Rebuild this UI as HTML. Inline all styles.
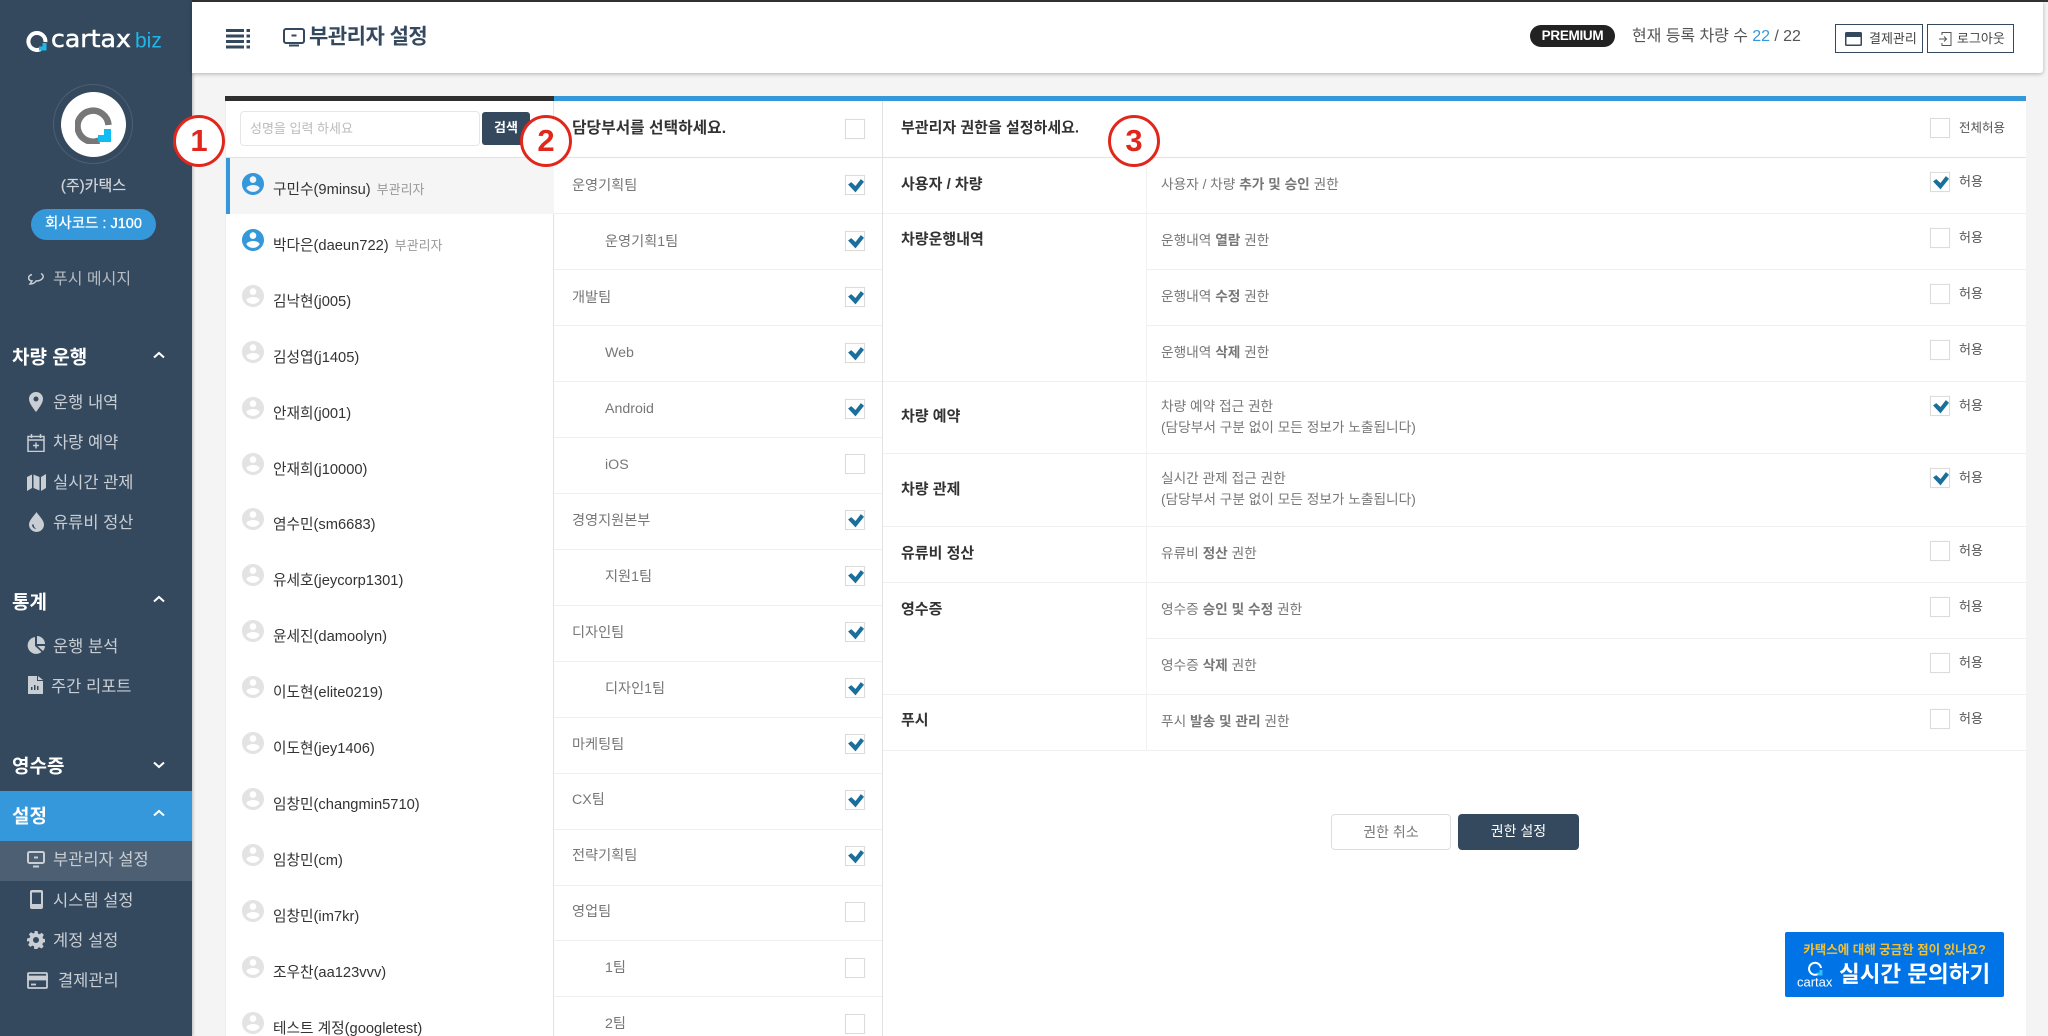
<!DOCTYPE html>
<html lang="ko"><head><meta charset="utf-8"><title>부관리자 설정</title>
<style>
*{box-sizing:border-box}
html,body{margin:0;padding:0;width:2048px;height:1036px;overflow:hidden;background:#f4f4f4;font-family:"Liberation Sans","Noto Sans CJK KR",sans-serif;color:#333}
#root{position:absolute;left:0;top:0;width:2048px;height:1036px;overflow:hidden;background:#f4f4f4}
.a{position:absolute;white-space:nowrap}
#side{position:absolute;left:0;top:0;width:192px;height:1036px;background:#34495e;box-shadow:1px 0 3px rgba(0,0,0,.25)}
#topline{position:absolute;left:0;top:0;width:2048px;height:2px;background:#333}
#head{position:absolute;left:192px;top:2px;width:1851px;height:71px;background:#fff;box-shadow:0 1px 4px rgba(0,0,0,.28);border-radius:0 0 3px 0}
.t{transform:translateY(-50%);line-height:1}
.sec{left:12px;font-size:19px;font-weight:bold;color:#fff;margin-top:1px}
.it{left:53px;font-size:16.5px;color:#c9ced4;margin-top:1px}
.ic{position:absolute;fill:#c9ced4}
.chev{position:absolute;left:153px;width:12px;height:8px;fill:none;stroke:#fff;stroke-width:2}
.panel{position:absolute;top:96px;height:940px;background:#fff}
.bar{position:absolute;left:0;top:0;right:0;height:5px}
.row{position:absolute;left:0;width:100%;height:56px}
.nm{position:absolute;left:47px;top:22px;font-size:14.7px;line-height:20px;color:#333;white-space:nowrap}
.nm small{font-size:13px;color:#999;margin-left:6px}
.pi{position:absolute;left:16px;top:15px;width:22px;height:22px;fill:#e3e3e3}
.pi.on{fill:#3498db}
.cb{position:absolute;width:20px;height:20px;background:#fff;border:1px solid #dcdcdc;box-shadow:0 0 1px rgba(0,0,0,.08)}
.cb svg{position:absolute;left:1px;top:1px;width:17px;height:17px;fill:#1a6f9c}
.dp{position:absolute;font-size:14.2px;color:#777;top:0;line-height:56px;white-space:nowrap;margin-top:1px}
.line{position:absolute;height:1px;background:#f0f0f0}
.lb{position:absolute;left:901px;font-size:15px;font-weight:bold;color:#333;white-space:nowrap;line-height:20px;margin-top:1px}
.sb{position:absolute;left:1161px;font-size:13.7px;color:#777;white-space:nowrap;line-height:21px;margin-top:1px}
.sb b{color:#777}
.hy{position:absolute;left:1959px;font-size:13px;color:#555;line-height:16px;margin-top:1px}
.num{position:absolute;width:52px;height:52px;border:3px solid #e1261c;border-radius:50%;background:#fff;color:#e1261c;font:bold 31px/46px "Liberation Sans",sans-serif;text-align:center}
.tb{position:absolute;top:24px;height:29px;border:1px solid #34495e;background:#fff;font-size:13px;color:#444;line-height:27px;white-space:nowrap}
</style></head><body>
<div id="root">
<svg width="0" height="0" style="position:absolute"><defs>
<symbol id="person" viewBox="2 2 20 20"><path d="M12 2C6.48 2 2 6.48 2 12s4.48 10 10 10 10-4.48 10-10S17.52 2 12 2zm0 3c1.66 0 3 1.34 3 3s-1.34 3-3 3-3-1.34-3-3 1.34-3 3-3zm0 14.2c-2.5 0-4.71-1.28-6-3.22.03-1.99 4-3.08 6-3.08 1.99 0 5.97 1.09 6 3.08-1.29 1.94-3.5 3.22-6 3.22z"/></symbol>
<symbol id="chk" viewBox="0 0 16 16"><path d="M1 7 4 4.800 8 8.500 13 2 16 4.500 8 14.500z"/></symbol>
</defs></svg>

<div id="topline"></div>
<div id="side">
 <svg class="a" style="left:26px;top:30px" width="22" height="22" viewBox="0 0 22 22"><path d="M14.500 19.200A8.500 8.500 0 1 1 19.400 12" fill="none" stroke="#fff" stroke-width="4"/><path d="M13 20.500v-4h3.500V13h4v7.500z" fill="#1fb6e8"/></svg>
 <div class="a t" style="left:51px;top:39px;font-size:24px;color:#fff;font-family:'DejaVu Sans',sans-serif;-webkit-text-stroke:.5px #fff;transform:translateY(-50%) scaleX(1.05);transform-origin:left center">cartax</div>
 <div class="a t" style="left:135px;top:41px;font-size:21px;color:#1fb6e8">biz</div>
 <div class="a" style="left:53px;top:84px;width:80px;height:80px;border:1px solid #4c6074;border-radius:50%"></div>
 <div class="a" style="left:61px;top:92px;width:65px;height:65px;background:#fff;border-radius:50%"></div>
 <svg class="a" style="left:75px;top:106px" width="38" height="38" viewBox="0 0 38 38"><path d="M24 34.500A15.500 15.500 0 1 1 33.500 19" fill="none" stroke="#777" stroke-width="6.500"/><path d="M23 36v-7h6v-6h7v13z" fill="#10bdf2"/></svg>
 <div class="a t" style="left:0;width:187px;text-align:center;top:186px;font-size:15px;color:#d2d6da;-webkit-text-stroke:.2px #d2d6da">(주)카택스</div>
 <div class="a" style="left:31px;top:209px;width:125px;height:31px;border-radius:16px;background:#3498db;color:#fff;font-size:14.5px;-webkit-text-stroke:.3px #fff;line-height:31px;text-align:center">회사코드 : J100</div>
 <svg class="ic" style="left:27px;top:272px;fill:none;stroke:#c9ced4;stroke-width:1.500" width="18" height="14" viewBox="0 0 18 14"><path d="M5 2.500c-5 1.500-4 6 0 6.500L3 12c3 0 5-1.500 6-3 5 0 8-3 7-5.500-.3-1-1-1.500-2-2"/></svg>
 <div class="a t" style="left:53px;top:280px;font-size:16px;color:#b5bbc2">푸시 메시지</div>

 <div class="a t sec" style="top:357px">차량 운행</div>
 <svg class="chev" style="top:351px" viewBox="0 0 12 8"><path d="M1 6.500 6 2l5 4.500"/></svg>
 <svg class="ic" style="left:29px;top:392px" width="14" height="20" viewBox="0 0 14 20"><path fill-rule="evenodd" d="M7 0a7 7 0 0 1 7 7c0 4-4 9-7 13C4 16 0 11 0 7a7 7 0 0 1 7-7zm0 4.500a2.500 2.500 0 1 0 0 5 2.500 2.500 0 0 0 0-5z"/></svg>
 <div class="a t it" style="top:402px">운행 내역</div>
 <svg class="ic" style="left:27px;top:433px;fill:none;stroke:#c9ced4;stroke-width:1.500" width="18" height="19" viewBox="0 0 18 19"><path d="M1 3.500h16v15H1zM1 7h16M4.500 1v4M13.500 1v4M6 12.500h6M9 9.500v6"/></svg>
 <div class="a t it" style="top:442px">차량 예약</div>
 <svg class="ic" style="left:27px;top:474px" width="19" height="17" viewBox="0 0 19 17"><path d="M0 3l5-2.500V14l-5 3zM6.500.5l6 2.500v13.500l-6-2.500zM14 3l5-3v14l-5 3z"/></svg>
 <div class="a t it" style="top:482px">실시간 관제</div>
 <svg class="ic" style="left:29px;top:512px" width="15" height="20" viewBox="0 0 15 20"><path fill-rule="evenodd" d="M7.500 0c2 3.500 7.500 8 7.500 12.500a7.500 7.500 0 0 1-15 0C0 8 5.500 3.500 7.500 0zM3 12.500c0 2.500 2 4.500 4.500 4.500-1.500-.8-2.800-2.500-2.800-4.500z"/></svg>
 <div class="a t it" style="top:522px">유류비 정산</div>

 <div class="a t sec" style="top:602px">통계</div>
 <svg class="chev" style="top:595px" viewBox="0 0 12 8"><path d="M1 6.500 6 2l5 4.500"/></svg>
 <svg class="ic" style="left:27px;top:636px" width="18" height="18" viewBox="0 0 18 18"><path d="M8 1v9l6.500 6A8.500 8.500 0 1 1 8 1zM10 0a8 8 0 0 1 8 8h-8zM10.500 10H18a8 8 0 0 1-2 5z"/></svg>
 <div class="a t it" style="top:646px">운행 분석</div>
 <svg class="ic" style="left:28px;top:676px" width="15" height="18" viewBox="0 0 15 18"><path fill-rule="evenodd" d="M0 0h9v5h6v13H0zM10 0l5 4h-5zM3 14h1.500v-3H3zm3 0h1.500V9H6zm3 0h1.500v-4H9z"/></svg>
 <div class="a t it" style="left:51px;top:686px">주간 리포트</div>

 <div class="a t sec" style="top:766px">영수증</div>
 <svg class="chev" style="top:761px" viewBox="0 0 12 8"><path d="M1 1.500 6 6l5-4.500"/></svg>
 <div class="a" style="left:0;top:791px;width:192px;height:50px;background:#3498db"></div>
 <div class="a t sec" style="top:816px">설정</div>
 <svg class="chev" style="top:809px" viewBox="0 0 12 8"><path d="M1 6.500 6 2l5 4.500"/></svg>
 <div class="a" style="left:0;top:841px;width:192px;height:40px;background:#4d5f72"></div>
 <svg class="ic" style="left:27px;top:851px;fill:none;stroke:#c9ced4;stroke-width:2" width="18" height="17" viewBox="0 0 18 17"><path d="M2.500 1h13a1.500 1.500 0 0 1 1.500 1.500v8a1.500 1.500 0 0 1-1.500 1.500h-13A1.500 1.500 0 0 1 1 10.500v-8A1.500 1.500 0 0 1 2.500 1zM6 15.500h6M7 6.500h4"/></svg>
 <div class="a t it" style="top:859px">부관리자 설정</div>
 <svg class="ic" style="left:30px;top:890px" width="13" height="19" viewBox="0 0 13 19"><path fill-rule="evenodd" d="M2 0h9a2 2 0 0 1 2 2v15a2 2 0 0 1-2 2H2a2 2 0 0 1-2-2V2a2 2 0 0 1 2-2zm0 2.500V14h9V2.500z"/></svg>
 <div class="a t it" style="top:900px">시스템 설정</div>
 <svg class="ic" style="left:27px;top:931px" width="18" height="18" viewBox="0 0 18 18"><path fill-rule="evenodd" d="M7.500 0h3l.5 2.500 1.500.7 2.300-1.300 2 2-1.300 2.300.7 1.500 2.300.5v3l-2.500.5-.7 1.500 1.300 2.300-2 2-2.300-1.300-1.500.7-.5 2.300h-3L7 15.300l-1.500-.7-2.300 1.300-2-2 1.300-2.300-.7-1.500L0 10.500v-3l2.500-.5.7-1.500-1.300-2.300 2-2 2.300 1.300 1.500-.7zM9 6a3 3 0 1 0 0 6 3 3 0 0 0 0-6z"/></svg>
 <div class="a t it" style="top:940px">계정 설정</div>
 <svg class="ic" style="left:27px;top:972px;fill:none;stroke:#c9ced4;stroke-width:1.800" width="21" height="17" viewBox="0 0 21 17"><path d="M2 1h17a1 1 0 0 1 1 1v13a1 1 0 0 1-1 1H2a1 1 0 0 1-1-1V2a1 1 0 0 1 1-1z"/><path d="M1 4.500h19v3H1z" fill="#c9ced4"/><path d="M4 12.500h5"/></svg>
 <div class="a t it" style="left:58px;top:980px">결제관리</div>
</div>

<div id="head"></div>
<svg class="a" style="left:226px;top:29px" width="25" height="20" viewBox="0 0 25 20" fill="#34495e"><path d="M0 0h18v3H0zM0 5.500h18v3H0zM0 11h18v3H0zM0 16.500h18v3H0zM20.500 0H24v3h-3.500zM20.500 5.500H24v3h-3.500zM20.500 11H24v3h-3.500zM20.500 16.500H24v3h-3.500z"/></svg>
<svg class="a" style="left:283px;top:28px" width="22" height="19" viewBox="0 0 22 19" fill="none" stroke="#34495e" stroke-width="2"><path d="M3 1h16a2 2 0 0 1 2 2v10a2 2 0 0 1-2 2H3a2 2 0 0 1-2-2V3a2 2 0 0 1 2-2zM6 17.500h10M8.500 7.500h5"/></svg>
<div class="a t" style="left:309px;top:37px;font-size:21px;font-weight:bold;color:#34495e;letter-spacing:-.5px">부관리자 설정</div>
<div class="a" style="left:1530px;top:25px;width:85px;height:22px;border-radius:11px;background:#222;color:#fff;font-size:13.5px;font-weight:bold;line-height:22px;text-align:center;letter-spacing:-.3px">PREMIUM</div>
<div class="a t" style="left:1632px;top:37px;font-size:16px;color:#555;letter-spacing:-.05px">현재 등록 차량 수 <span style="color:#3498db">22</span> / 22</div>
<div class="tb" style="left:1835px;width:88px;padding-left:33px">결제관리<svg class="a" style="left:9px;top:7px" width="17" height="14" viewBox="0 0 17 14"><path d="M1.500 0h14A1.500 1.500 0 0 1 17 1.500v11a1.500 1.500 0 0 1-1.500 1.500h-14A1.500 1.500 0 0 1 0 12.500v-11A1.500 1.500 0 0 1 1.500 0zM1.500 5v7.500h14V5z" fill="#34495e" fill-rule="evenodd"/></svg></div>
<div class="tb" style="left:1927px;width:87px;padding-left:29px">로그아웃<svg class="a" style="left:11px;top:7px" width="13" height="14" viewBox="0 0 13 14" fill="none" stroke="#555"><path d="M3 3V.5h9v13H3V11M0 7h7M5 4.500 7.500 7 5 9.500"/></svg></div>

<!-- list panel -->
<div class="panel" style="left:225px;width:329px;border-right:1px solid #e2e2e2;border-left:1px solid #ececec">
 <div class="bar" style="background:#2f2f2f;left:-1px;right:-1px"></div>
 <div class="a" style="left:14px;top:15px;width:240px;height:35px;border:1px solid #e6e6e6;border-radius:4px;font-size:13px;color:#bbb;line-height:33px;padding-left:9px">성명을 입력 하세요</div>
 <div class="a" style="left:256px;top:16px;width:48px;height:33px;border-radius:3px;background:#34495e;color:#fff;font-size:13px;line-height:31px;text-align:center;font-weight:bold">검색</div>
 <div class="a" style="left:0;top:61px;width:328px;height:1px;background:#e2e2e2"></div>
 <div class="a" style="left:0;top:62px;width:328px;height:878px;overflow:hidden">
  <div class="row" style="top:0;background:#f5f5f5;border-left:4px solid #3498db"><svg class="pi on" style="left:12px"><use href="#person"/></svg><div class="nm" style="left:43px">구민수(9minsu)<small>부관리자</small></div></div>
  <div class="row" style="top:55.900px"><svg class="pi on"><use href="#person"/></svg><div class="nm">박다은(daeun722)<small>부관리자</small></div></div>
  <div class="row" style="top:111.800px"><svg class="pi"><use href="#person"/></svg><div class="nm">김낙현(j005)</div></div>
  <div class="row" style="top:167.700px"><svg class="pi"><use href="#person"/></svg><div class="nm">김성엽(j1405)</div></div>
  <div class="row" style="top:223.600px"><svg class="pi"><use href="#person"/></svg><div class="nm">안재희(j001)</div></div>
  <div class="row" style="top:279.500px"><svg class="pi"><use href="#person"/></svg><div class="nm">안재희(j10000)</div></div>
  <div class="row" style="top:335.400px"><svg class="pi"><use href="#person"/></svg><div class="nm">염수민(sm6683)</div></div>
  <div class="row" style="top:391.300px"><svg class="pi"><use href="#person"/></svg><div class="nm">유세호(jeycorp1301)</div></div>
  <div class="row" style="top:447.200px"><svg class="pi"><use href="#person"/></svg><div class="nm">윤세진(damoolyn)</div></div>
  <div class="row" style="top:503.100px"><svg class="pi"><use href="#person"/></svg><div class="nm">이도현(elite0219)</div></div>
  <div class="row" style="top:559px"><svg class="pi"><use href="#person"/></svg><div class="nm">이도현(jey1406)</div></div>
  <div class="row" style="top:614.900px"><svg class="pi"><use href="#person"/></svg><div class="nm">임창민(changmin5710)</div></div>
  <div class="row" style="top:670.800px"><svg class="pi"><use href="#person"/></svg><div class="nm">임창민(cm)</div></div>
  <div class="row" style="top:726.700px"><svg class="pi"><use href="#person"/></svg><div class="nm">임창민(im7kr)</div></div>
  <div class="row" style="top:782.600px"><svg class="pi"><use href="#person"/></svg><div class="nm">조우찬(aa123vvv)</div></div>
  <div class="row" style="top:838.500px"><svg class="pi"><use href="#person"/></svg><div class="nm">테스트 계정(googletest)</div></div>
 </div>
</div>

<!-- dept panel -->
<div class="panel" style="left:554px;width:329px;border-right:1px solid #e2e2e2">
 <div class="bar" style="background:#3498db;right:-1px;left:0"></div>
 <div class="a t" style="left:18px;top:33px;font-size:15.800px;font-weight:bold;color:#333">담당부서를 선택하세요.</div>
 <div class="cb" style="left:291px;top:23px"></div>
 <div class="a" style="left:0;top:61px;width:328px;height:1px;background:#e2e2e2"></div>
</div>
<div class="line" style="left:554px;top:213px;width:328px"></div>
<div class="line" style="left:554px;top:269px;width:328px"></div>
<div class="line" style="left:554px;top:325px;width:328px"></div>
<div class="line" style="left:554px;top:381px;width:328px"></div>
<div class="line" style="left:554px;top:437px;width:328px"></div>
<div class="line" style="left:554px;top:493px;width:328px"></div>
<div class="line" style="left:554px;top:549px;width:328px"></div>
<div class="line" style="left:554px;top:605px;width:328px"></div>
<div class="line" style="left:554px;top:661px;width:328px"></div>
<div class="line" style="left:554px;top:717px;width:328px"></div>
<div class="line" style="left:554px;top:773px;width:328px"></div>
<div class="line" style="left:554px;top:829px;width:328px"></div>
<div class="line" style="left:554px;top:885px;width:328px"></div>
<div class="line" style="left:554px;top:940px;width:328px"></div>
<div class="line" style="left:554px;top:996px;width:328px"></div>
<div class="dp" style="left:572px;top:157px">운영기획팀</div><div class="cb" style="left:845px;top:175px"><svg><use href="#chk"/></svg></div>
<div class="dp" style="left:605px;top:213px">운영기획1팀</div><div class="cb" style="left:845px;top:231px"><svg><use href="#chk"/></svg></div>
<div class="dp" style="left:572px;top:269px">개발팀</div><div class="cb" style="left:845px;top:287px"><svg><use href="#chk"/></svg></div>
<div class="dp" style="left:605px;top:324px">Web</div><div class="cb" style="left:845px;top:343px"><svg><use href="#chk"/></svg></div>
<div class="dp" style="left:605px;top:380px">Android</div><div class="cb" style="left:845px;top:399px"><svg><use href="#chk"/></svg></div>
<div class="dp" style="left:605px;top:436px">iOS</div><div class="cb" style="left:845px;top:454px"></div>
<div class="dp" style="left:572px;top:492px">경영지원본부</div><div class="cb" style="left:845px;top:510px"><svg><use href="#chk"/></svg></div>
<div class="dp" style="left:605px;top:548px">지원1팀</div><div class="cb" style="left:845px;top:566px"><svg><use href="#chk"/></svg></div>
<div class="dp" style="left:572px;top:604px">디자인팀</div><div class="cb" style="left:845px;top:622px"><svg><use href="#chk"/></svg></div>
<div class="dp" style="left:605px;top:660px">디자인1팀</div><div class="cb" style="left:845px;top:678px"><svg><use href="#chk"/></svg></div>
<div class="dp" style="left:572px;top:716px">마케팅팀</div><div class="cb" style="left:845px;top:734px"><svg><use href="#chk"/></svg></div>
<div class="dp" style="left:572px;top:771px">CX팀</div><div class="cb" style="left:845px;top:790px"><svg><use href="#chk"/></svg></div>
<div class="dp" style="left:572px;top:827px">전략기획팀</div><div class="cb" style="left:845px;top:846px"><svg><use href="#chk"/></svg></div>
<div class="dp" style="left:572px;top:883px">영업팀</div><div class="cb" style="left:845px;top:902px"></div>
<div class="dp" style="left:605px;top:939px">1팀</div><div class="cb" style="left:845px;top:958px"></div>
<div class="dp" style="left:605px;top:995px">2팀</div><div class="cb" style="left:845px;top:1014px"></div>

<!-- perm panel -->
<div class="panel" style="left:883px;width:1143px">
 <div class="bar" style="background:#3498db"></div>
 <div class="a" style="left:0;top:61px;width:1143px;height:1px;background:#e2e2e2"></div>
</div>
<div class="a t" style="left:901px;top:128px;font-size:15px;font-weight:bold;color:#333">부관리자 권한을 설정하세요.</div>
<div class="cb" style="left:1930px;top:118px"></div>
<div class="hy" style="top:119px;font-size:12.500px">전체허용</div>

<div class="line" style="left:1146px;top:157px;width:1px;height:593px;background:#f2f2f2"></div>
<div class="line" style="left:883px;top:213px;width:1143px"></div>
<div class="line" style="left:1146px;top:269px;width:880px"></div>
<div class="line" style="left:1146px;top:325px;width:880px"></div>
<div class="line" style="left:883px;top:381px;width:1143px"></div>
<div class="line" style="left:883px;top:453px;width:1143px"></div>
<div class="line" style="left:883px;top:526px;width:1143px"></div>
<div class="line" style="left:883px;top:582px;width:1143px"></div>
<div class="line" style="left:1146px;top:638px;width:880px"></div>
<div class="line" style="left:883px;top:694px;width:1143px"></div>
<div class="line" style="left:883px;top:750px;width:1143px"></div>

<div class="lb" style="top:174px">사용자 / 차량</div>
<div class="lb" style="top:229px">차량운행내역</div>
<div class="lb" style="top:406px">차량 예약</div>
<div class="lb" style="top:479px">차량 관제</div>
<div class="lb" style="top:543px">유류비 정산</div>
<div class="lb" style="top:599px">영수증</div>
<div class="lb" style="top:710px">푸시</div>

<div class="sb" style="top:173px">사용자 / 차량 <b>추가 및 승인</b> 권한</div>
<div class="sb" style="top:229px">운행내역 <b>열람</b> 권한</div>
<div class="sb" style="top:285px">운행내역 <b>수정</b> 권한</div>
<div class="sb" style="top:341px">운행내역 <b>삭제</b> 권한</div>
<div class="sb" style="top:395px">차량 예약 접근 권한<br>(담당부서 구분 없이 모든 정보가 노출됩니다)</div>
<div class="sb" style="top:467px">실시간 관제 접근 권한<br>(담당부서 구분 없이 모든 정보가 노출됩니다)</div>
<div class="sb" style="top:542px">유류비 <b>정산</b> 권한</div>
<div class="sb" style="top:598px">영수증 <b>승인 및 수정</b> 권한</div>
<div class="sb" style="top:654px">영수증 <b>삭제</b> 권한</div>
<div class="sb" style="top:710px">푸시 <b>발송 및 관리</b> 권한</div>

<div class="cb" style="left:1930px;top:172px"><svg><use href="#chk"/></svg></div><div class="hy" style="top:173px">허용</div>
<div class="cb" style="left:1930px;top:228px"></div><div class="hy" style="top:229px">허용</div>
<div class="cb" style="left:1930px;top:284px"></div><div class="hy" style="top:285px">허용</div>
<div class="cb" style="left:1930px;top:340px"></div><div class="hy" style="top:341px">허용</div>
<div class="cb" style="left:1930px;top:396px"><svg><use href="#chk"/></svg></div><div class="hy" style="top:397px">허용</div>
<div class="cb" style="left:1930px;top:468px"><svg><use href="#chk"/></svg></div><div class="hy" style="top:469px">허용</div>
<div class="cb" style="left:1930px;top:541px"></div><div class="hy" style="top:542px">허용</div>
<div class="cb" style="left:1930px;top:597px"></div><div class="hy" style="top:598px">허용</div>
<div class="cb" style="left:1930px;top:653px"></div><div class="hy" style="top:654px">허용</div>
<div class="cb" style="left:1930px;top:709px"></div><div class="hy" style="top:710px">허용</div>

<div class="a" style="left:1331px;top:814px;width:120px;height:36px;border:1px solid #ddd;border-radius:4px;background:#fff;color:#777;font-size:14px;line-height:34px;text-align:center">권한 취소</div>
<div class="a" style="left:1458px;top:814px;width:121px;height:36px;border-radius:4px;background:#34495e;color:#fff;font-size:14px;line-height:34px;text-align:center">권한 설정</div>

<div class="a" style="left:1785px;top:932px;width:219px;height:65px;border-radius:2px;background:#0073e6"></div>
<div class="a t" style="left:1785px;width:219px;text-align:center;top:950px;font-size:12.500px;font-weight:bold;color:#f5c02f">카택스에 대해 궁금한 점이 있나요?</div>
<div class="a t" style="left:1839px;top:975px;font-size:22.500px;font-weight:bold;color:#fff">실시간 문의하기</div>
<svg class="a" style="left:1808px;top:960px" width="15" height="16" viewBox="0 0 15 16"><path d="M10 14A6 6 0 1 1 13 8" fill="none" stroke="#fff" stroke-width="2"/><path d="M9.500 15.500v-3h2V10h3v5.500z" fill="#35c0f5"/></svg>
<div class="a t" style="left:1797px;top:982px;font-size:13px;color:#fff">cartax</div>

<div class="num" style="left:173px;top:115px">1</div>
<div class="num" style="left:520px;top:115px">2</div>
<div class="num" style="left:1108px;top:115px">3</div>
</div>
</body></html>
